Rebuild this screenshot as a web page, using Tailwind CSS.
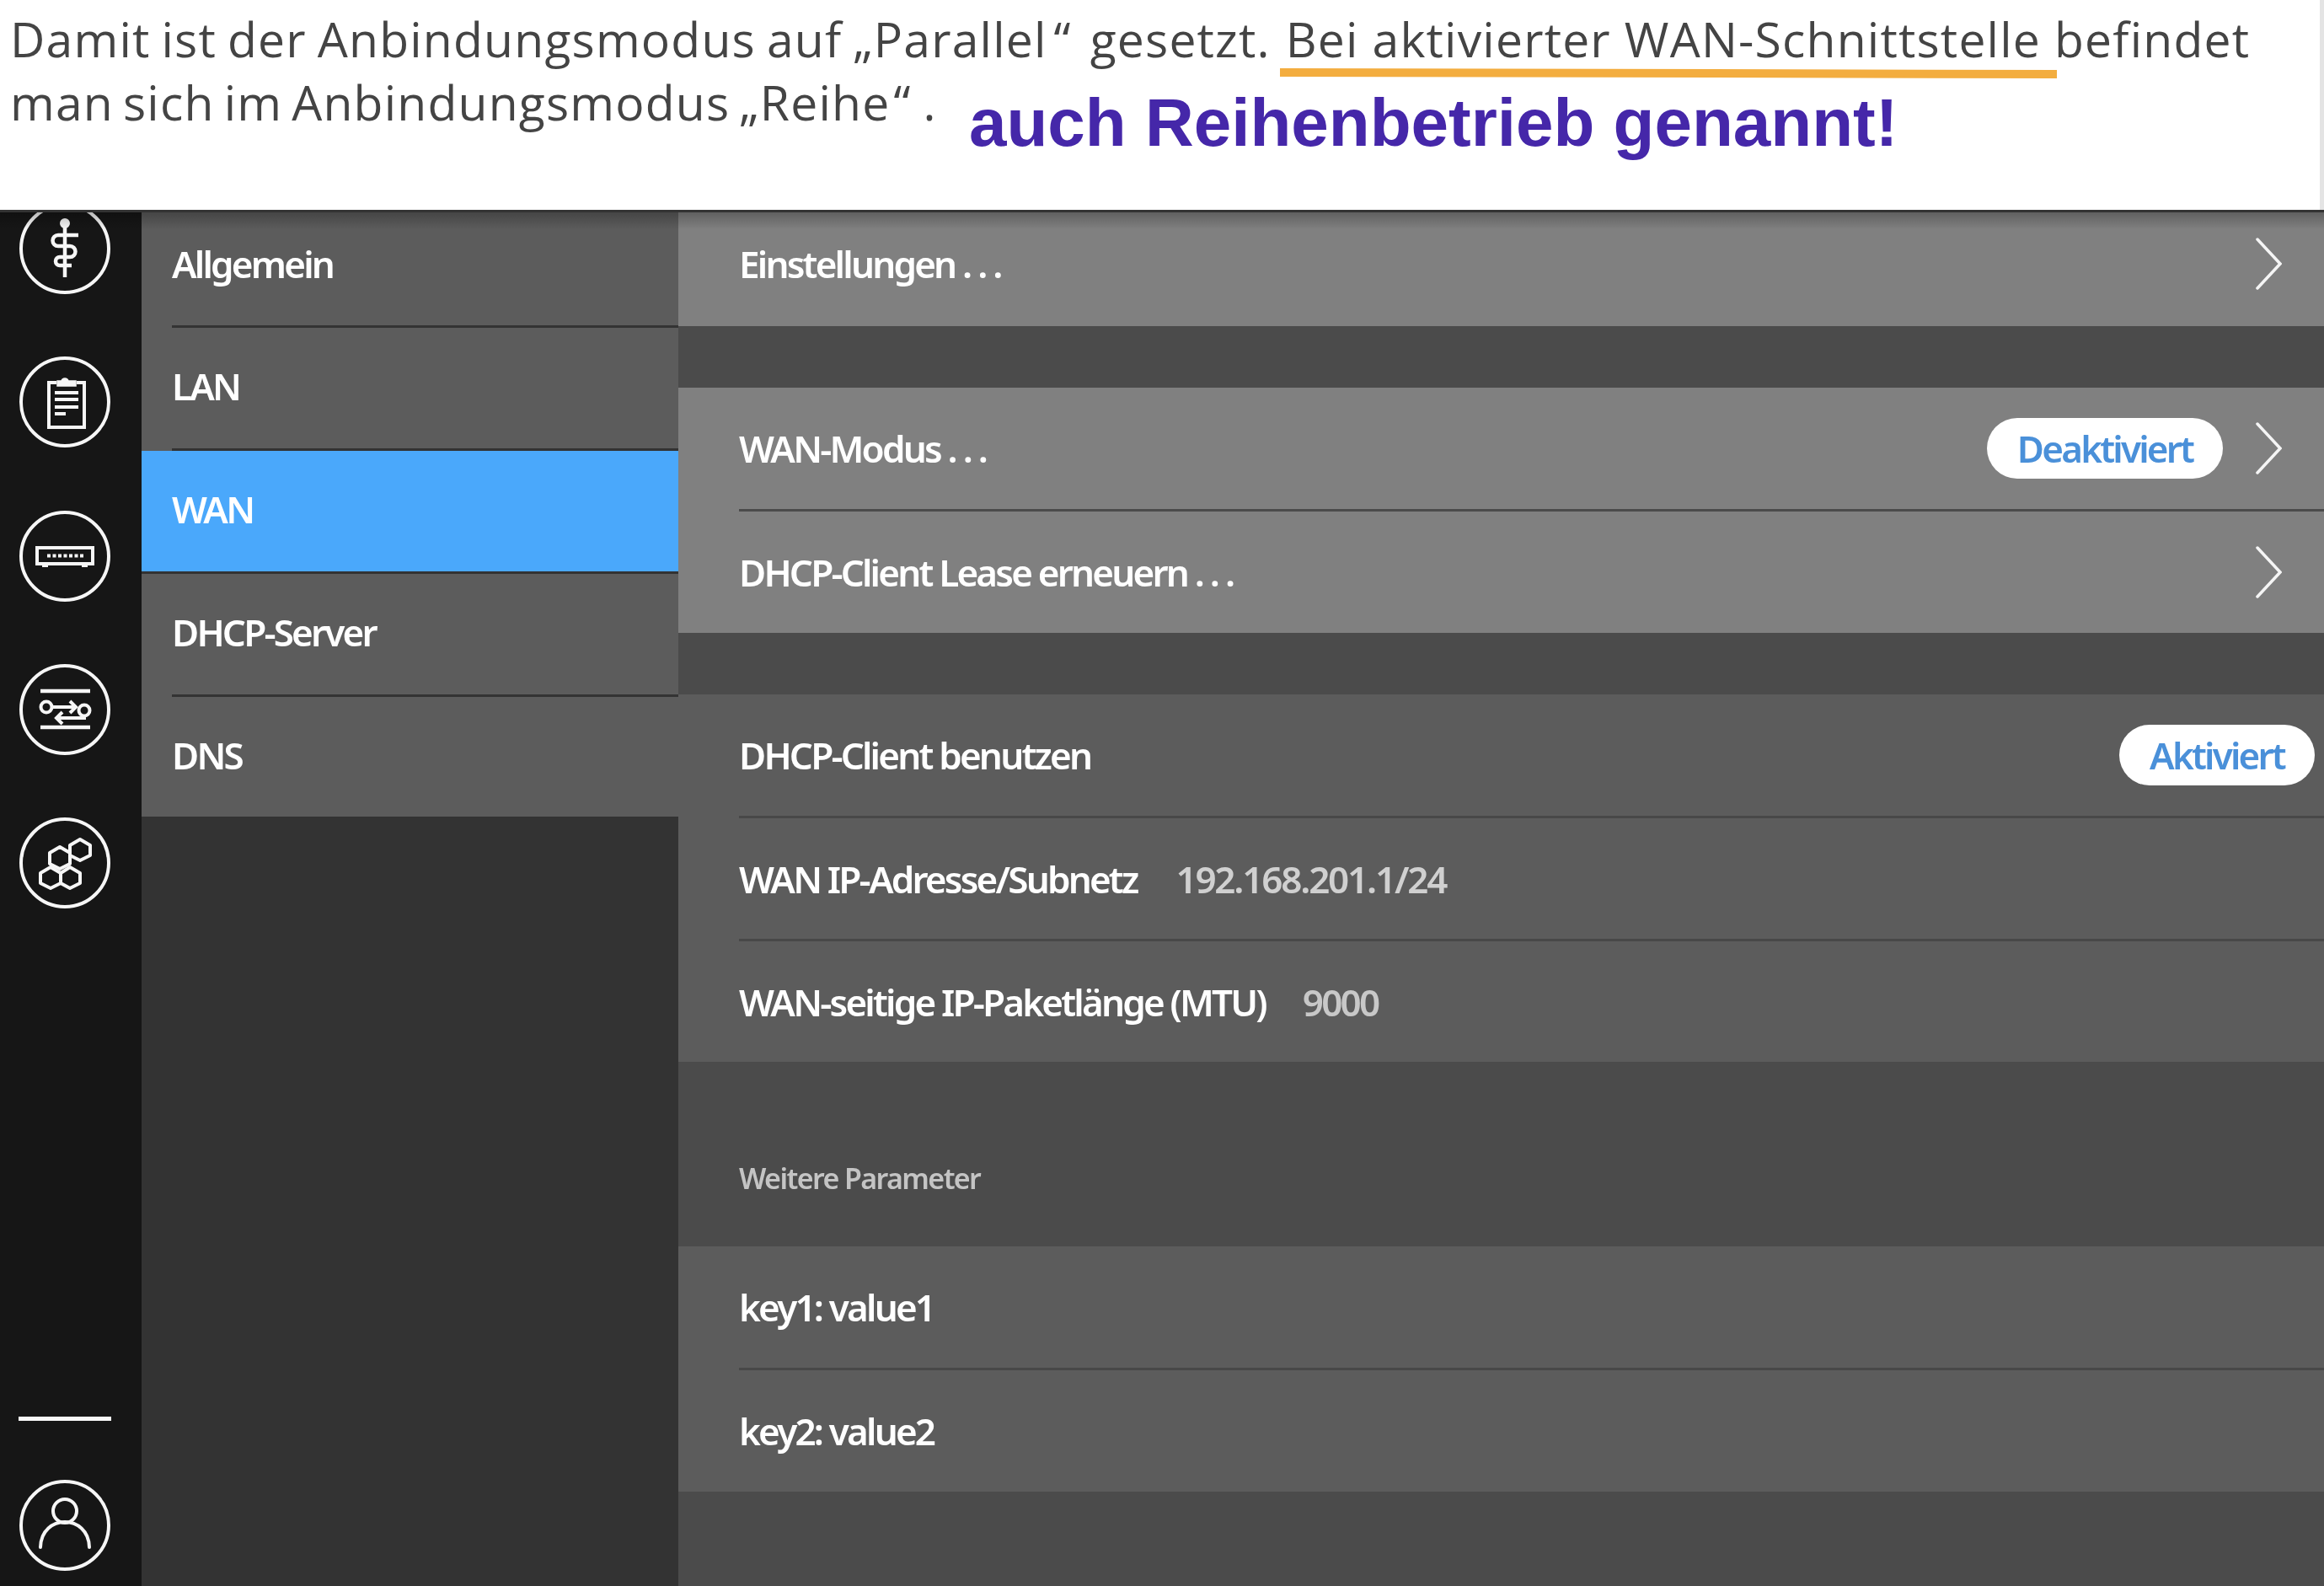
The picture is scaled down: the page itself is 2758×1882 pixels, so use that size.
<!DOCTYPE html>
<html lang="de"><head><meta charset="utf-8"><script src="https://cdn.jsdelivr.net/npm/@tailwindcss/browser@4"></script></head>
<body class="m-0 bg-white">
<div class="relative w-[2758px] h-[1882px] overflow-hidden flex flex-col font-['Noto_Sans',sans-serif]">
  <header class="relative h-[249px] shrink-0 bg-white border-r-[5px] border-r-[#e4e4e4] pl-[12px] pt-[9px] text-[#444444] text-[57px] leading-[75px] tracking-[1.2px] whitespace-nowrap font-['Open_Sans',sans-serif]">
    <p><span class="[word-spacing:-3px]">Damit ist der Anbindungsmodus auf „Parallel<span class="ml-[8px] mr-[6px]">“</span></span> gesetzt.<span class="ml-[2px]"> Bei aktivierter WAN-Schnittstelle befindet</span></p>
    <p><span class="[word-spacing:-5px]">man sich im Anbindungsmodus „Reihe<span class="ml-[4px] mr-[14px]">“</span></span>.</p>
    <svg class="absolute left-[1519px] top-[80px]" width="922" height="14" viewBox="0 0 922 14"><polygon points="0,1 922,3 922,13 0,11" fill="#f3ad3f"/></svg>
    <span class="absolute left-[1150px] top-[100px] text-[80px] leading-[92px] tracking-normal font-bold text-[#4527a9] font-['Liberation_Sans',sans-serif]">auch Reihenbetrieb genannt!</span>
  </header>
  <div class="h-[3px] shrink-0 bg-[#333333]"></div>
  <main class="relative flex-1 flex min-h-0 text-white text-[44px] tracking-[-2.8px] font-semibold blur-[0.6px]">
    <div class="absolute inset-x-0 top-0 h-[20px] bg-gradient-to-b from-black/25 to-transparent z-10"></div>
    <nav class="w-[168px] shrink-0 bg-[#161616] flex flex-col items-center overflow-hidden pb-[18px] pr-[14px]">
      <svg class="shrink-0 mt-[-11px]" width="108" height="108" viewBox="0 0 108 108" fill="none" stroke="#f6f6f6" stroke-width="4"><circle cx="54" cy="54" r="52"/><path d="M54 24V88" stroke-width="4.500"/><circle cx="54" cy="24" r="4" fill="#f6f6f6"/><path d="M70 38H46a6.500 6.500 0 0 0 0 13H60a6.500 6.500 0 0 1 0 13H48a5 5 0 0 0 0 10H62" stroke-width="4.500"/></svg>
      <svg class="shrink-0 mt-[74px]" width="108" height="108" viewBox="0 0 108 108" fill="none" stroke="#f6f6f6" stroke-width="4"><circle cx="54" cy="54" r="52"/><path d="M44 31H35V84H77V31H68"/><path d="M45 35V29H50C51 25 57 25 58 29H67V35Z" fill="#f6f6f6" stroke-width="1.500"/><path d="M42 43H70M42 51H70M42 60H70M42 68H55" stroke-width="4"/></svg>
      <svg class="shrink-0 mt-[75px]" width="108" height="108" viewBox="0 0 108 108" fill="none" stroke="#f6f6f6" stroke-width="4"><circle cx="54" cy="54" r="52"/><rect x="21" y="44" width="66" height="19"/><path d="M33 53.500H77" stroke-width="4" stroke-dasharray="4 2.500"/><path d="M27 65H34M74 65H81"/></svg>
      <svg class="shrink-0 mt-[74px]" width="108" height="108" viewBox="0 0 108 108" fill="none" stroke="#f6f6f6" stroke-width="4"><circle cx="54" cy="54" r="52"/><path d="M25 32H84M25 75H84" stroke-width="4.500"/><circle cx="32" cy="51" r="6.500"/><path d="M39 51H66M60 44L67 51L60 58"/><circle cx="77" cy="55" r="6.500"/><path d="M77 62V64H45M51 57L44 64L51 71"/></svg>
      <svg class="shrink-0 mt-[74px]" width="108" height="108" viewBox="0 0 108 108" fill="none" stroke="#f6f6f6" stroke-width="4" stroke-linejoin="round"><circle cx="54" cy="54" r="52"/><path d="M48 35L60 42V55L48 61L36 55V42Z"/><path d="M37 59L49 66V78L37 84L25 78V66Z"/><path d="M60 59L72 66V78L60 84L49 78V66Z"/><path d="M72 26L84 33V45L72 51L60 45V33Z"/></svg>
      <div class="mt-auto w-[110px] h-[5px] bg-[#f8f8f8] shrink-0"></div>
      <svg class="shrink-0 mt-[70px]" width="108" height="108" viewBox="0 0 108 108" fill="none" stroke="#f6f6f6" stroke-width="4" stroke-linecap="round"><circle cx="54" cy="54" r="52"/><circle cx="54" cy="37" r="14"/><path d="M25 80C26 40 82 40 83 80"/></svg>
    </nav>
    <aside class="w-[637px] shrink-0 bg-[#333333]">
      <div class="h-[134px] pl-[36px] pb-[12px] bg-[#5c5c5c] flex items-center">Allgemein</div>
      <div class="h-[3px] bg-[#5c5c5c] pl-[36px]"><div class="h-full bg-[#333333]"></div></div>
      <div class="h-[143px] pl-[36px] pb-[6px] bg-[#5c5c5c] flex items-center">LAN</div>
      <div class="h-[3px] bg-[#5c5c5c] pl-[36px]"><div class="h-full bg-[#333333]"></div></div>
      <div class="h-[143px] pl-[36px] pb-[6px] bg-[#4aa8fb] flex items-center">WAN</div>
      <div class="h-[3px] bg-[#333333]"></div>
      <div class="h-[143px] pl-[36px] pb-[6px] bg-[#5c5c5c] flex items-center">DHCP-Server</div>
      <div class="h-[3px] bg-[#5c5c5c] pl-[36px]"><div class="h-full bg-[#333333]"></div></div>
      <div class="h-[142px] pl-[36px] pb-[4px] bg-[#5c5c5c] flex items-center">DNS</div>
    </aside>
    <section class="flex-1 bg-[#4b4b4b] min-w-0">
      <div class="h-[135px] pl-[72px] pr-[50px] pb-[13px] bg-[#808080] flex items-center justify-between"><span>Einstellungen <span class="tracking-[6px]">...</span></span>
        <svg width="31" height="62" viewBox="0 0 31 62" fill="none" stroke="#f5f5f5" stroke-width="3.500" stroke-linecap="round"><path d="M2 2L29 31L2 60"/></svg></div>
      <div class="h-[73px]"></div>
      <div class="h-[144px] pl-[72px] pr-[50px] bg-[#808080] flex items-center"><span>WAN-Modus <span class="tracking-[6px]">...</span></span>
        <span class="ml-auto mr-[39px] w-[280px] h-[72px] rounded-full bg-white text-[#4a90d9] flex items-center justify-center">Deaktiviert</span>
        <svg width="31" height="62" viewBox="0 0 31 62" fill="none" stroke="#f5f5f5" stroke-width="3.500" stroke-linecap="round"><path d="M2 2L29 31L2 60"/></svg></div>
      <div class="h-[3px] bg-[#808080] pl-[72px]"><div class="h-full bg-[#4b4b4b]"></div></div>
      <div class="h-[144px] pl-[72px] pr-[50px] bg-[#808080] flex items-center justify-between"><span>DHCP-Client Lease erneuern <span class="tracking-[6px]">...</span></span>
        <svg width="31" height="62" viewBox="0 0 31 62" fill="none" stroke="#f5f5f5" stroke-width="3.500" stroke-linecap="round"><path d="M2 2L29 31L2 60"/></svg></div>
      <div class="h-[73px]"></div>
      <div class="h-[144px] pl-[72px] pr-[11px] bg-[#5c5c5c] flex items-center justify-between">DHCP-Client benutzen
        <span class="w-[232px] h-[72px] rounded-full bg-white text-[#4a90d9] flex items-center justify-center">Aktiviert</span></div>
      <div class="h-[3px] bg-[#5c5c5c] pl-[72px]"><div class="h-full bg-[#484848]"></div></div>
      <div class="h-[143px] pl-[72px] bg-[#5c5c5c] flex items-center gap-[46px]"><span>WAN IP-Adresse/Subnetz</span><span class="text-[#d0d0d0] tracking-[-2.2px]">192.168.201.1/24</span></div>
      <div class="h-[3px] bg-[#5c5c5c] pl-[72px]"><div class="h-full bg-[#484848]"></div></div>
      <div class="h-[143px] pl-[72px] bg-[#5c5c5c] flex items-center gap-[44px]"><span>WAN-seitige IP-Paketlänge (MTU)</span><span class="text-[#c8c8c8]">9000</span></div>
      <div class="h-[219px] pl-[72px] pt-[118px] text-[#c4c4c4] text-[34px] leading-[40px] tracking-[-1.6px]">Weitere Parameter</div>
      <div class="h-[144px] pl-[72px] bg-[#5c5c5c] flex items-center">key1: value1</div>
      <div class="h-[3px] bg-[#5c5c5c] pl-[72px]"><div class="h-full bg-[#484848]"></div></div>
      <div class="h-[144px] pl-[72px] bg-[#5c5c5c] flex items-center">key2: value2</div>
    </section>
  </main>
</div>
</body></html>
